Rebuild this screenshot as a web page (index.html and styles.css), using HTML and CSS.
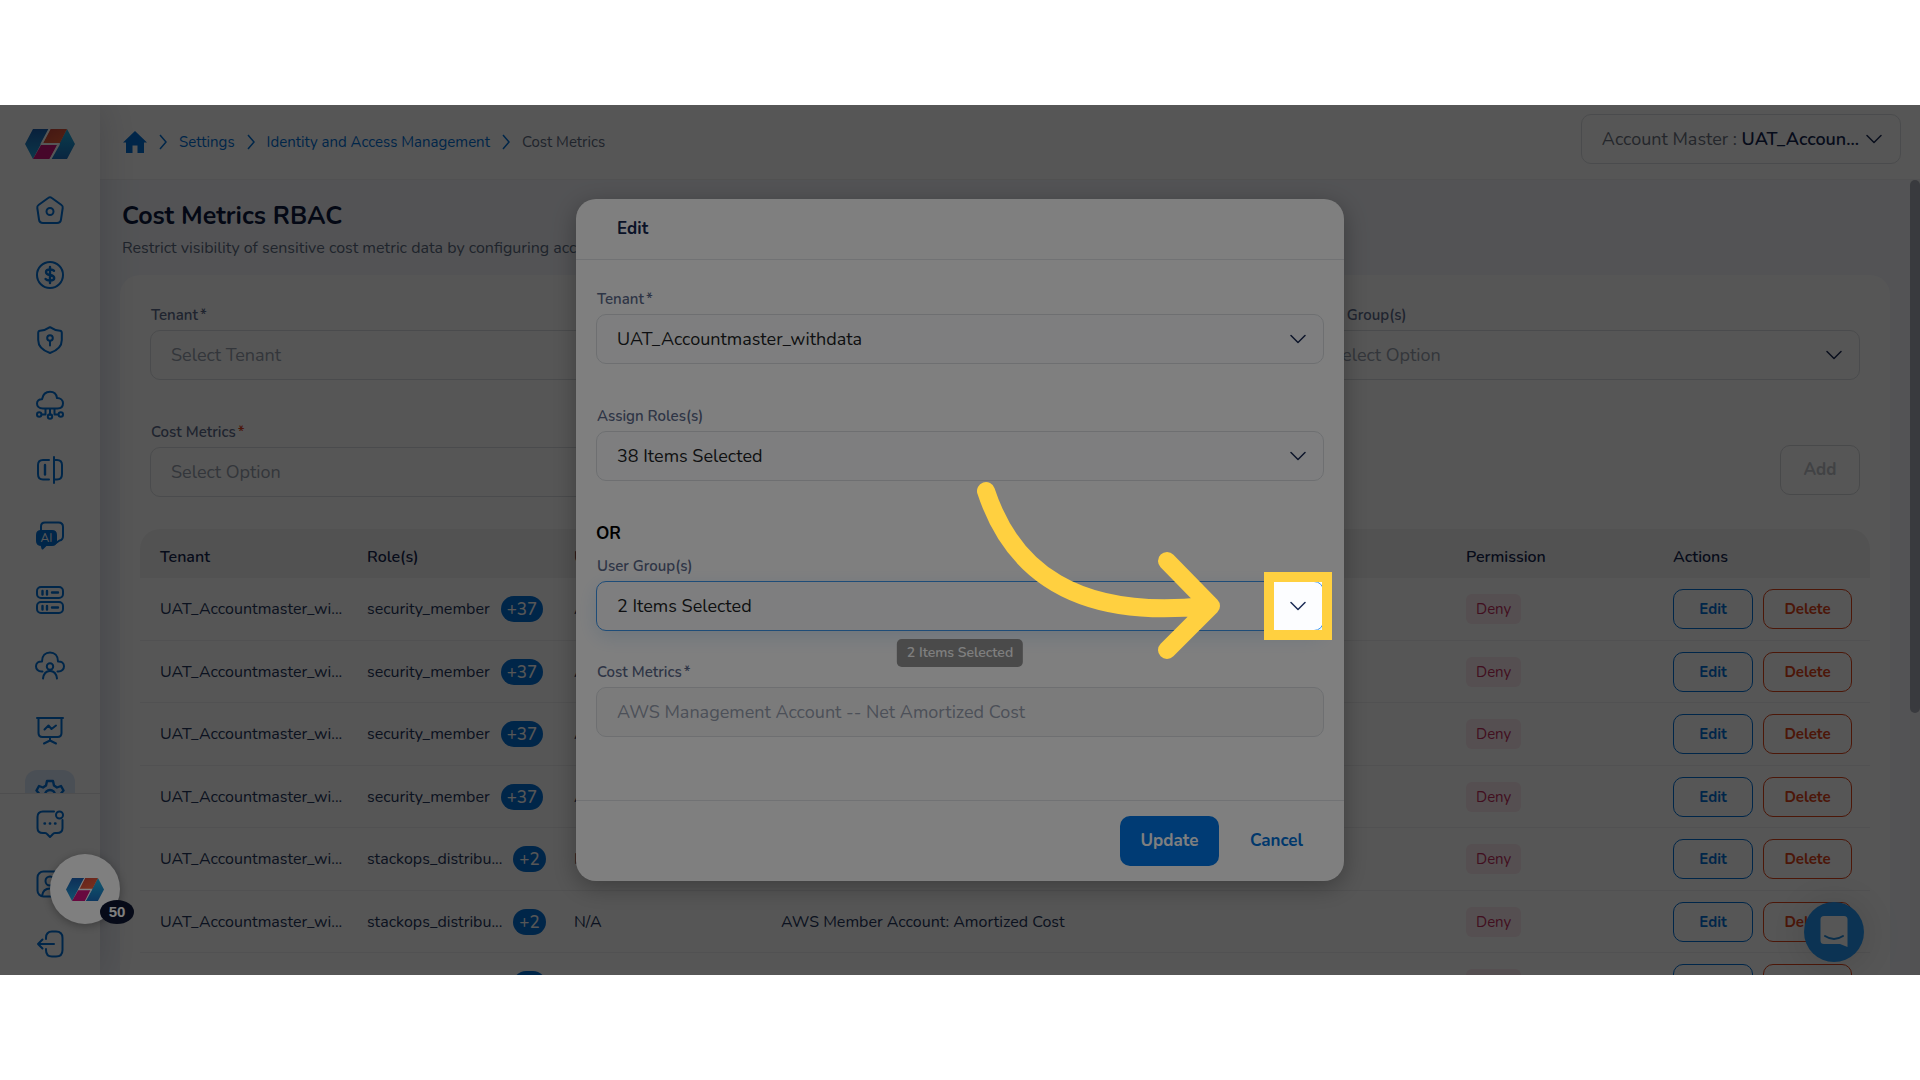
FILE: index.html
```html
<!DOCTYPE html>
<html lang="en">
<head>
<meta charset="utf-8">
<title>Cost Metrics RBAC</title>
<link rel="stylesheet" href="styles.css">
</head>
<body>
<svg class="defs" aria-hidden="true">
  <defs>
    <linearGradient id="gl" x1="0" y1="0" x2="0" y2="1"><stop offset="0" stop-color="#1c5fb0"/><stop offset="1" stop-color="#22a2dc"/></linearGradient>
    <linearGradient id="gr" x1="0" y1="0" x2="0" y2="1"><stop offset="0" stop-color="#20b4e0"/><stop offset="1" stop-color="#1b6fc0"/></linearGradient>
    <linearGradient id="go" x1="0" y1="0" x2="1" y2="1"><stop offset="0" stop-color="#c8443a"/><stop offset="1" stop-color="#f4663a"/></linearGradient>
    <symbol id="logo" viewBox="0 0 50 30">
      <path fill="url(#gl)" d="M8 0H24L8 30L0 15Z"/>
      <path fill="url(#gr)" d="M42 0L50 15L42 30H26Z"/>
      <path fill="url(#go)" d="M25 0H42L35 14H18Z"/>
      <path fill="#d0127e" d="M16 16H32L25 30H8Z"/>
      <path fill="none" stroke="#fff" d="M24.500 0L16.500 15H34M34 15L25.500 30"/>
    </symbol>
    <symbol id="chev" viewBox="0 0 16 16"><path d="M1 4.500L8 11.500L15 4.500"/></symbol>
    <symbol id="crumb" viewBox="0 0 8 16"><path d="M1 1L7 8L1 15"/></symbol>
  </defs>
</svg>
<div class="stage">
  <div class="app">
    <nav class="sidebar" aria-label="Main">
      <a class="brand" href="#" aria-label="Home"><svg width="50" height="30"><use href="#logo"/></svg></a>
      <div class="nav-list">
        <a href="#" aria-label="Dashboard"><svg viewBox="0 0 28 28"><path d="M12.500 1.800Q14 .6 15.500 1.800L25.500 9Q27 10 26.700 12L25 23.500Q24.500 27 21 27H7Q3.500 27 3 23.500L1.300 12Q1 10 2.500 9Z"/><circle cx="14" cy="15.500" r="3.500"/></svg></a>
        <a href="#" aria-label="Cost"><svg viewBox="0 0 28 28"><circle cx="14" cy="14" r="13"/><path class="bold" d="M18 9.800Q17 8.500 14 8.500Q10 8.500 10 11Q10 13.400 14 14Q18.200 14.600 18.200 17Q18.200 19.600 14 19.600Q10.800 19.600 9.600 18M14 6V22"/></svg></a>
        <a href="#" aria-label="Security"><svg viewBox="0 0 28 28"><path d="M14 1.200Q19 4.600 24 4.800Q25.800 5 25.800 7V14Q25.800 23 14 27Q2.200 23 2.200 14V7Q2.200 5 4 4.800Q9 4.600 14 1.200Z"/><circle cx="14" cy="12" r="2.800"/><path d="M14 15V19.500"/></svg></a>
        <a href="#" aria-label="Network"><svg viewBox="0 0 28 28"><path d="M7 17.500C2.500 17.500 1 14.800 1 12.600C1 9.800 3.200 8 6 8.200C7 3 10.500 .8 14 .8C18 .8 20.500 3.600 21 7C24.500 7 27 9 27 12.300C27 15.500 24.800 17.500 21.500 17.500ZM14 17.500V24M9.500 18V23.500H6M18.500 18V23.500H22"/><circle cx="3.200" cy="23.500" r="2.200"/><circle cx="14" cy="25.500" r="2.200"/><circle cx="24.800" cy="23.500" r="2.200"/></svg></a>
        <a href="#" aria-label="Compare"><svg viewBox="0 0 28 28"><path d="M13 4H7Q2 4 2 9V18Q2 23.500 7 23.500H13M18 1V27M18 4H21Q26 4 26 9V18Q26 23.500 21 23.500H18"/><path class="bold" d="M9 9V18.500"/></svg></a>
        <a href="#" aria-label="Assistant"><svg viewBox="0 0 28 28"><path d="M5 9V5.500Q5 1.500 9 1.500H22.500Q27 1.500 27 6V15Q27 19 23.500 19.500L20 22"/><path class="solid" d="M5 10H16Q20 10 20 14V20Q20 24 16 24H10L6.500 27.500L5.500 24Q1 24 1 20V14Q1 10 5 10Z"/></svg><span class="ai">AI</span></a>
        <a href="#" aria-label="Resources"><svg viewBox="0 0 28 28"><rect x="1" y="1" width="26" height="11" rx="4"/><rect x="1" y="16" width="26" height="11" rx="4"/><path class="bold" d="M6.500 5V8.500M11 5V8.500M16 6.500H22M6.500 20V23.500M11 20V23.500M16 21.500H22"/></svg></a>
        <a href="#" aria-label="Users"><svg class="wide" viewBox="0 0 30 28"><path d="M7.500 20.500C3 21 1 18 1 15.200C1 12 3.500 10.300 7 10.500C7 4.500 10.500 1.500 15 1.500C19.500 1.500 23 4.500 23 10.500C26.500 10.300 29 12 29 15.200C29 18 27 21 22.500 20.500M8 27.500Q9 20 15 20Q21 20 22 27.500"/><circle cx="15" cy="15.500" r="3.200"/></svg></a>
        <a href="#" aria-label="Reports"><svg viewBox="0 0 28 28"><path d="M1 2H27M2.500 2V17Q2.500 21 6.500 21H21.500Q25.500 21 25.500 17V2M14 21V24.500M8 27.500L14 24.500L20 27.500M8.500 13.500L12.500 9.500L15.500 13L20 9.500"/></svg></a>
        <a class="active" href="#" aria-label="Settings"><svg viewBox="0 0 28 28"><path class="bold" d="M11 0H17L18 4.500L21 6.500L25 5L27.500 9.500L25 12.500V15.500L27.500 18.500L25 23L21 21.500L18 23.500L17 28H11L10 23.500L7 21.500L3 23L.5 18.500L3 15.500V12.500L.5 9.500L3 5L7 6.500L10 4.500Z"/><circle class="bold" cx="14" cy="14" r="5"/></svg></a>
      </div>
      <div class="nav-foot">
        <a href="#" aria-label="Feedback"><svg viewBox="0 0 28 28"><path d="M18 1.500H7Q1.500 1.500 1.500 7V18Q1.500 23 7 23H9Q10.500 23 11.500 24.500L14 27L16.500 24.500Q17.500 23 19 23H21Q26.500 23 26.500 18V10"/><circle cx="23.500" cy="5" r="3.500"/><path class="bold" d="M8.500 13.500H9M13.800 13.500H14.200M19 13.500H19.500"/></svg></a>
        <a href="#" aria-label="Profile"><svg viewBox="0 0 28 28"><rect x="1.500" y="1.500" width="25" height="25" rx="6"/><circle cx="14" cy="11" r="4.500"/><path d="M6 26Q7 18.500 14 18.500Q21 18.500 22 26"/></svg></a>
        <a href="#" aria-label="Log out"><svg viewBox="0 0 28 28"><path d="M10 9V8Q10 1.500 16 1.500H20Q26.500 1.500 26.500 8V20Q26.500 26.500 20 26.500H16Q10 26.500 10 20V19M18 14H2M6.500 9.500L2 14L6.500 18.500"/></svg></a>
      </div>
    </nav>
    <div class="content">
      <header class="topbar">
        <nav class="crumbs" aria-label="Breadcrumb">
          <a href="#" aria-label="Home"><svg class="house" width="24" height="22" viewBox="0 0 24 22"><path d="M12 0L24 11.500H21V22H14.500V14.500H9.500V22H3V11.500H0Z"/></svg></a>
          <svg class="sep"><use href="#crumb"/></svg>
          <a href="#">Settings</a>
          <svg class="sep"><use href="#crumb"/></svg>
          <a href="#">Identity and Access Management</a>
          <svg class="sep"><use href="#crumb"/></svg>
          <span>Cost Metrics</span>
        </nav>
        <button class="account" type="button"><span>Account Master : <b>UAT_Accoun...</b></span><svg class="chev"><use href="#chev"/></svg></button>
      </header>
      <main class="page">
        <h1>Cost Metrics RBAC</h1>
        <p class="lead">Restrict visibility of sensitive cost metric data by configuring access</p>
        <section class="card">
          <form class="filters">
            <div class="field">
              <label for="f-tenant">Tenant<span class="star">*</span></label>
              <div class="select"><select id="f-tenant"><option>Select Tenant</option></select></div>
            </div>
            <div class="field third">
              <label for="f-group">User Group(s)</label>
              <div class="select"><select id="f-group"><option>Select Option</option></select><svg class="chev"><use href="#chev"/></svg></div>
            </div>
            <div class="field">
              <label for="f-metric">Cost Metrics<span class="star req">*</span></label>
              <div class="select"><select id="f-metric"><option>Select Option</option></select></div>
            </div>
            <button class="add" type="button" disabled>Add</button>
          </form>
          <table>
            <colgroup><col class="c"><col class="c"><col class="c"><col><col class="c"><col class="c-act"></colgroup>
            <thead><tr><th>Tenant</th><th>Role(s)</th><th>User Group(s)</th><th></th><th>Permission</th><th>Actions</th></tr></thead>
            <tbody>
              <tr><td>UAT_Accountmaster_wi...</td><td><div class="role">security_member<span class="pill">+37</span></div></td><td>All</td><td></td><td><span class="deny">Deny</span></td><td><div class="acts"><button class="edit">Edit</button><button class="del">Delete</button></div></td></tr>
              <tr><td>UAT_Accountmaster_wi...</td><td><div class="role">security_member<span class="pill">+37</span></div></td><td>All</td><td></td><td><span class="deny">Deny</span></td><td><div class="acts"><button class="edit">Edit</button><button class="del">Delete</button></div></td></tr>
              <tr><td>UAT_Accountmaster_wi...</td><td><div class="role">security_member<span class="pill">+37</span></div></td><td>All</td><td></td><td><span class="deny">Deny</span></td><td><div class="acts"><button class="edit">Edit</button><button class="del">Delete</button></div></td></tr>
              <tr><td>UAT_Accountmaster_wi...</td><td><div class="role">security_member<span class="pill">+37</span></div></td><td>All</td><td></td><td><span class="deny">Deny</span></td><td><div class="acts"><button class="edit">Edit</button><button class="del">Delete</button></div></td></tr>
              <tr><td>UAT_Accountmaster_wi...</td><td><div class="role">stackops_distribu...<span class="pill">+2</span></div></td><td>N/A</td><td></td><td><span class="deny">Deny</span></td><td><div class="acts"><button class="edit">Edit</button><button class="del">Delete</button></div></td></tr>
              <tr><td>UAT_Accountmaster_wi...</td><td><div class="role">stackops_distribu...<span class="pill">+2</span></div></td><td>N/A</td><td>AWS Member Account: Amortized Cost</td><td><span class="deny">Deny</span></td><td><div class="acts"><button class="edit">Edit</button><button class="del">Delete</button></div></td></tr>
              <tr><td></td><td><div class="role">stackops_distribu...<span class="pill">+2</span></div></td><td></td><td></td><td><span class="deny">Deny</span></td><td><div class="acts"><button class="edit">Edit</button><button class="del">Delete</button></div></td></tr>
            </tbody>
          </table>
        </section>
        <div class="scrollbar"><div class="thumb"></div></div>
      </main>
    </div>
    <button class="chat" type="button" aria-label="Open chat"><svg width="28" height="32" viewBox="0 0 28 32"><path fill="#fff" d="M4 0H24Q27.500 0 27.500 3.500V31L20 28H4Q.5 28 .5 24.500V3.500Q.5 0 4 0Z"/><path fill="none" stroke="#2088dc" stroke-width="2" stroke-linecap="round" d="M5 20Q14 26 23 20"/></svg></button>
  </div>

  <div class="backdrop">
    <div class="modal" role="dialog" aria-labelledby="dlg-title">
      <h2 id="dlg-title">Edit</h2>
      <div class="modal-body">
        <div class="field">
          <label for="m-tenant">Tenant<span class="star">*</span></label>
          <div class="select"><select id="m-tenant"><option>UAT_Accountmaster_withdata</option></select><svg class="chev"><use href="#chev"/></svg></div>
        </div>
        <div class="field roles">
          <label for="m-roles">Assign Roles(s)</label>
          <div class="select"><select id="m-roles"><option>38 Items Selected</option></select><svg class="chev"><use href="#chev"/></svg></div>
        </div>
        <p class="or">OR</p>
        <div class="field">
          <label for="m-groups">User Group(s)</label>
          <div class="select focus">
            <select id="m-groups"><option>2 Items Selected</option></select><svg class="chev"><use href="#chev"/></svg>
            <span class="tip" role="tooltip">2 Items Selected</span>
            <span class="spotlight"></span>
            <svg class="arrow" viewBox="970 475 255 190" aria-hidden="true"><path d="M986 491C1012 570 1075 620 1206 606M1167 561L1211 606L1167 650"/></svg>
          </div>
        </div>
        <div class="field metric">
          <label for="m-metric">Cost Metrics<span class="star">*</span></label>
          <input id="m-metric" type="text" value="AWS Management Account -- Net Amortized Cost" disabled>
        </div>
      </div>
      <div class="modal-foot">
        <button class="update" type="button">Update</button>
        <button class="cancel" type="button">Cancel</button>
      </div>
    </div>
  </div>

  <button class="bubble" type="button" aria-label="Guides"><svg width="38" height="23"><use href="#logo"/></svg><span class="count">50</span></button>
</div>
</body>
</html>
```

FILE: styles.css
```css
* { box-sizing: border-box; }

body {
  margin: 0;
  min-height: 100vh;
  display: flex;
  align-items: center;
  background: #fff;
  color: #1b2b4d;
  font-family: Nunito, Lato, sans-serif;
  font-size: 15px;
  line-height: 20px;
}

button, input, select { font: inherit; color: inherit; }
button { cursor: pointer; }
h1, h2, p { margin: 0; }
a { color: #0070d8; text-decoration: none; }
.defs { position: absolute; width: 0; height: 0; }

.stage {
  position: relative;
  width: 100%;
  aspect-ratio: 64 / 29;
  overflow: hidden;
}

.app {
  display: grid;
  grid-template-columns: 100px 1fr;
  height: 100%;
}

/* Sidebar */
.sidebar {
  position: relative;
  z-index: 1;
  display: flex;
  flex-direction: column;
  min-height: 0;
  background: #fff;
  box-shadow: 0 0 40px rgba(20, 20, 50, .18);
}
.brand { display: flex; justify-content: center; padding: 24px 0 20px; }
.nav-list { flex: 1; min-height: 0; overflow: hidden; padding-top: 6px; }
.nav-list a, .nav-foot a {
  position: relative;
  display: flex;
  justify-content: center;
  align-items: center;
  width: 50px;
  height: 50px;
  margin: 0 auto 15px;
  border-radius: 12px;
}
.nav-list .active { background: #dceafc; }
.nav-foot { border-top: 1px solid #e6e6ea; padding-top: 5px; }
.nav-foot a { margin-bottom: 10px; }
.nav-foot a:last-child { margin-bottom: 6px; }
.sidebar a svg { width: 28px; height: 28px; overflow: visible; fill: none; stroke: #0070d8; stroke-width: 2; stroke-linejoin: round; stroke-linecap: round; }
.sidebar .brand svg { width: 50px; height: 30px; stroke: none; }
.sidebar a svg.wide { width: 30px; }
.sidebar .bold { stroke-width: 2.400; }
.sidebar .solid { fill: #0070d8; }
.ai {
  position: absolute;
  left: 12px;
  top: 22px;
  width: 19px;
  text-align: center;
  color: #fff;
  font-size: 12px;
  line-height: 12px;
}

/* Top bar */
.content { display: flex; flex-direction: column; min-width: 0; min-height: 0; }
.topbar {
  display: flex;
  justify-content: space-between;
  height: 75px;
  padding: 0 19px 0 23px;
  border-bottom: 1px solid #f0f0f2;
  background: #fff;
}
.crumbs { display: flex; align-items: center; gap: 12px; color: #5d6b82; }
.crumbs a { display: flex; }
.house { fill: #0070d8; }
.sep { width: 8px; height: 16px; overflow: visible; fill: none; stroke: #0070d8; stroke-width: 1.500; }
.chev { width: 16px; height: 16px; fill: none; stroke: #1b2b55; stroke-width: 1.500; stroke-linecap: round; stroke-linejoin: round; }
.account {
  display: flex;
  align-items: center;
  gap: 7px;
  height: 50px;
  margin-top: 9px;
  padding: 0 18px 0 20px;
  border: 1px solid #dcdfe3;
  border-radius: 10px;
  background: #fff;
  color: #6b7280;
  font-size: 18px;
}
.account b { color: #14264f; font-weight: 600; }

/* Page */
.page {
  position: relative;
  flex: 1;
  min-height: 0;
  overflow: hidden;
  padding: 20px 30px 0 20px;
  background: #f5f7fc;
}
h1 { padding-left: 2px; color: #0c1a3e; font-size: 25px; line-height: 32px; font-weight: 700; }
.lead { padding-left: 2px; margin: 4px 0 15px; color: #5d6b82; font-size: 16px; line-height: 24px; }
.card { padding: 30px 20px; border-radius: 20px; background: #fff; }
.filters {
  display: grid;
  grid-template-columns: repeat(3, 1fr);
  gap: 42px 30px;
  padding: 0 10px;
  margin-bottom: 32px;
}
.field { display: flex; flex-direction: column; gap: 5px; min-width: 0; }
.field label { padding-left: 1px; color: #5d6b8c; font-weight: 600; }
.third { grid-column: 3; }
.star { margin-left: 2px; }
.req { color: #e0401c; }
.select { position: relative; display: grid; align-items: center; }
.select > select, .select > .chev { grid-area: 1 / 1; }
.select > .chev { position: relative; justify-self: end; margin-right: 18px; pointer-events: none; }
select, input {
  appearance: none;
  width: 100%;
  height: 50px;
  padding: 0 20px;
  border: 1px solid #dcdfe3;
  border-radius: 10px;
  background: #fff;
  color: #98a0ae;
  font-size: 18px;
  opacity: 1;
}
.add {
  grid-column: 3;
  justify-self: end;
  align-self: end;
  width: 80px;
  height: 50px;
  margin-bottom: 2px;
  border: 1px solid #d6d8dc;
  border-radius: 10px;
  background: #fff;
  color: #c0c4ca;
  font-size: 17px;
  font-weight: 700;
}

table { width: 100%; table-layout: fixed; border-collapse: separate; border-spacing: 0; }
.c { width: 207px; }
.c-act { width: 217px; }
th { height: 49px; padding: 7px 0 0 20px; background: #f4f4f4; color: #14264f; text-align: left; font-weight: 600; font-size: 16px; }
th:first-child { border-top-left-radius: 20px; }
th:last-child { border-top-right-radius: 20px; }
td { height: 63px; padding: 0 0 0 20px; border-bottom: 1px solid #f0f0f2; color: #24365c; font-size: 16px; white-space: nowrap; }
tr:nth-child(even) td { height: 62px; }
.role { display: flex; align-items: center; gap: 11px; }
.pill {
  height: 26px;
  padding: 0 6px;
  border-radius: 13px;
  background: #0070d8;
  color: #fff;
  font-size: 17px;
  line-height: 28px;
  font-weight: 500;
}
.deny { display: inline-block; padding: 5px 10px; border-radius: 6px; background: #fce9ef; color: #c22e5e; font-size: 15px; }
.acts { display: flex; gap: 10px; }
.acts button { height: 40px; border: 1px solid; border-radius: 10px; background: #fff; font-size: 15px; font-weight: 700; padding: 0; }
.edit { width: 80px; color: #0070d8; }
.del { width: 89px; color: #e0441a; }

.scrollbar { position: absolute; top: 0; right: 0; bottom: 0; width: 10px; background: #f2f3f5; }
.thumb { height: 67%; border-radius: 5px; background: #a9adb8; }

.chat {
  position: absolute;
  right: 56px;
  bottom: 13px;
  display: grid;
  place-items: center;
  width: 60px;
  height: 60px;
  padding: 0;
  border: 0;
  border-radius: 50%;
  background: #2499f7;
  box-shadow: 0 2px 40px rgba(0, 0, 0, .16);
}

/* Dialog */
.backdrop {
  position: absolute;
  inset: 0;
  z-index: auto;
  display: flex;
  align-items: center;
  justify-content: center;
}
.backdrop::before {
  content: "";
  position: absolute;
  inset: 0;
  z-index: 2;
  background: rgba(0, 0, 0, .32);
}
.modal {
  position: relative;
  z-index: auto;
  width: 40%;
  border-radius: 20px;
}
.modal::before {
  content: "";
  position: absolute;
  inset: 0;
  z-index: 3;
  border-radius: 20px;
  background: #fff;
  box-shadow: 0 6px 24px rgba(0, 0, 0, .3);
}
h2, .modal-body, .modal-foot { position: relative; }
h2, .modal-foot { z-index: 4; }
h2 { padding: 20px 41px; border-bottom: 1px solid #e2e4e8; color: #14264f; font-size: 17px; font-weight: 700; }
.modal-body { z-index: 6; padding: 29px 20px 63px; }
.modal .select select { background: #fcfdff; color: #1d1f24; }
.roles { margin-top: 42px; }
.or { margin: 41px 0 10px; color: #000; font-size: 17px; line-height: 24px; font-weight: 700; }
.metric { margin-top: 31px; }
.metric input { background: #f7f7f7; color: #98a0b0; }
.modal .focus select { border-color: #3d98f0; box-shadow: 0 6px 20px rgba(0, 112, 216, .15); }
.modal-foot { display: flex; justify-content: flex-end; gap: 20px; padding: 15px 30px 15px 20px; border-top: 1px solid #e2e4e8; }
.modal-foot button { height: 50px; border: 0; border-radius: 10px; font-size: 17px; font-weight: 700; }
.update { width: 99px; background: #0076e8; color: #fff; }
.cancel { background: none; color: #0070d8; padding: 0 11px; }
.tip {
  position: absolute;
  top: 58px;
  left: 50%;
  transform: translateX(-50%);
  padding: 4px 10px;
  border-radius: 5px;
  background: #949494;
  color: #fff;
  font-size: 14px;
  font-weight: 600;
  white-space: nowrap;
}

/* Guide highlight */
.spotlight {
  position: absolute;
  z-index: 10;
  top: -9px;
  right: -8px;
  width: 68px;
  height: 68px;
  border: 10px solid #ffd040;
  box-shadow: 0 0 0 9999px rgba(0, 0, 0, .5);
  pointer-events: none;
}
.arrow {
  position: absolute;
  z-index: 11;
  top: -106px;
  right: 99px;
  width: 255px;
  height: 190px;
  fill: none;
  stroke: #ffd040;
  stroke-width: 18;
  stroke-linecap: round;
  stroke-linejoin: round;
  pointer-events: none;
}

.bubble {
  position: absolute;
  z-index: 5;
  left: 50px;
  bottom: 51px;
  display: grid;
  place-items: center;
  width: 70px;
  height: 70px;
  padding: 0;
  border: 0;
  border-radius: 50%;
  background: #fff;
  box-shadow: 0 2px 10px rgba(0, 0, 0, .3);
}
.count {
  position: absolute;
  left: 50px;
  bottom: 0;
  width: 34px;
  height: 24px;
  border-radius: 50%;
  background: #0c1530;
  color: #fff;
  font: bold 15px/24px "Liberation Sans", sans-serif;
}
```
